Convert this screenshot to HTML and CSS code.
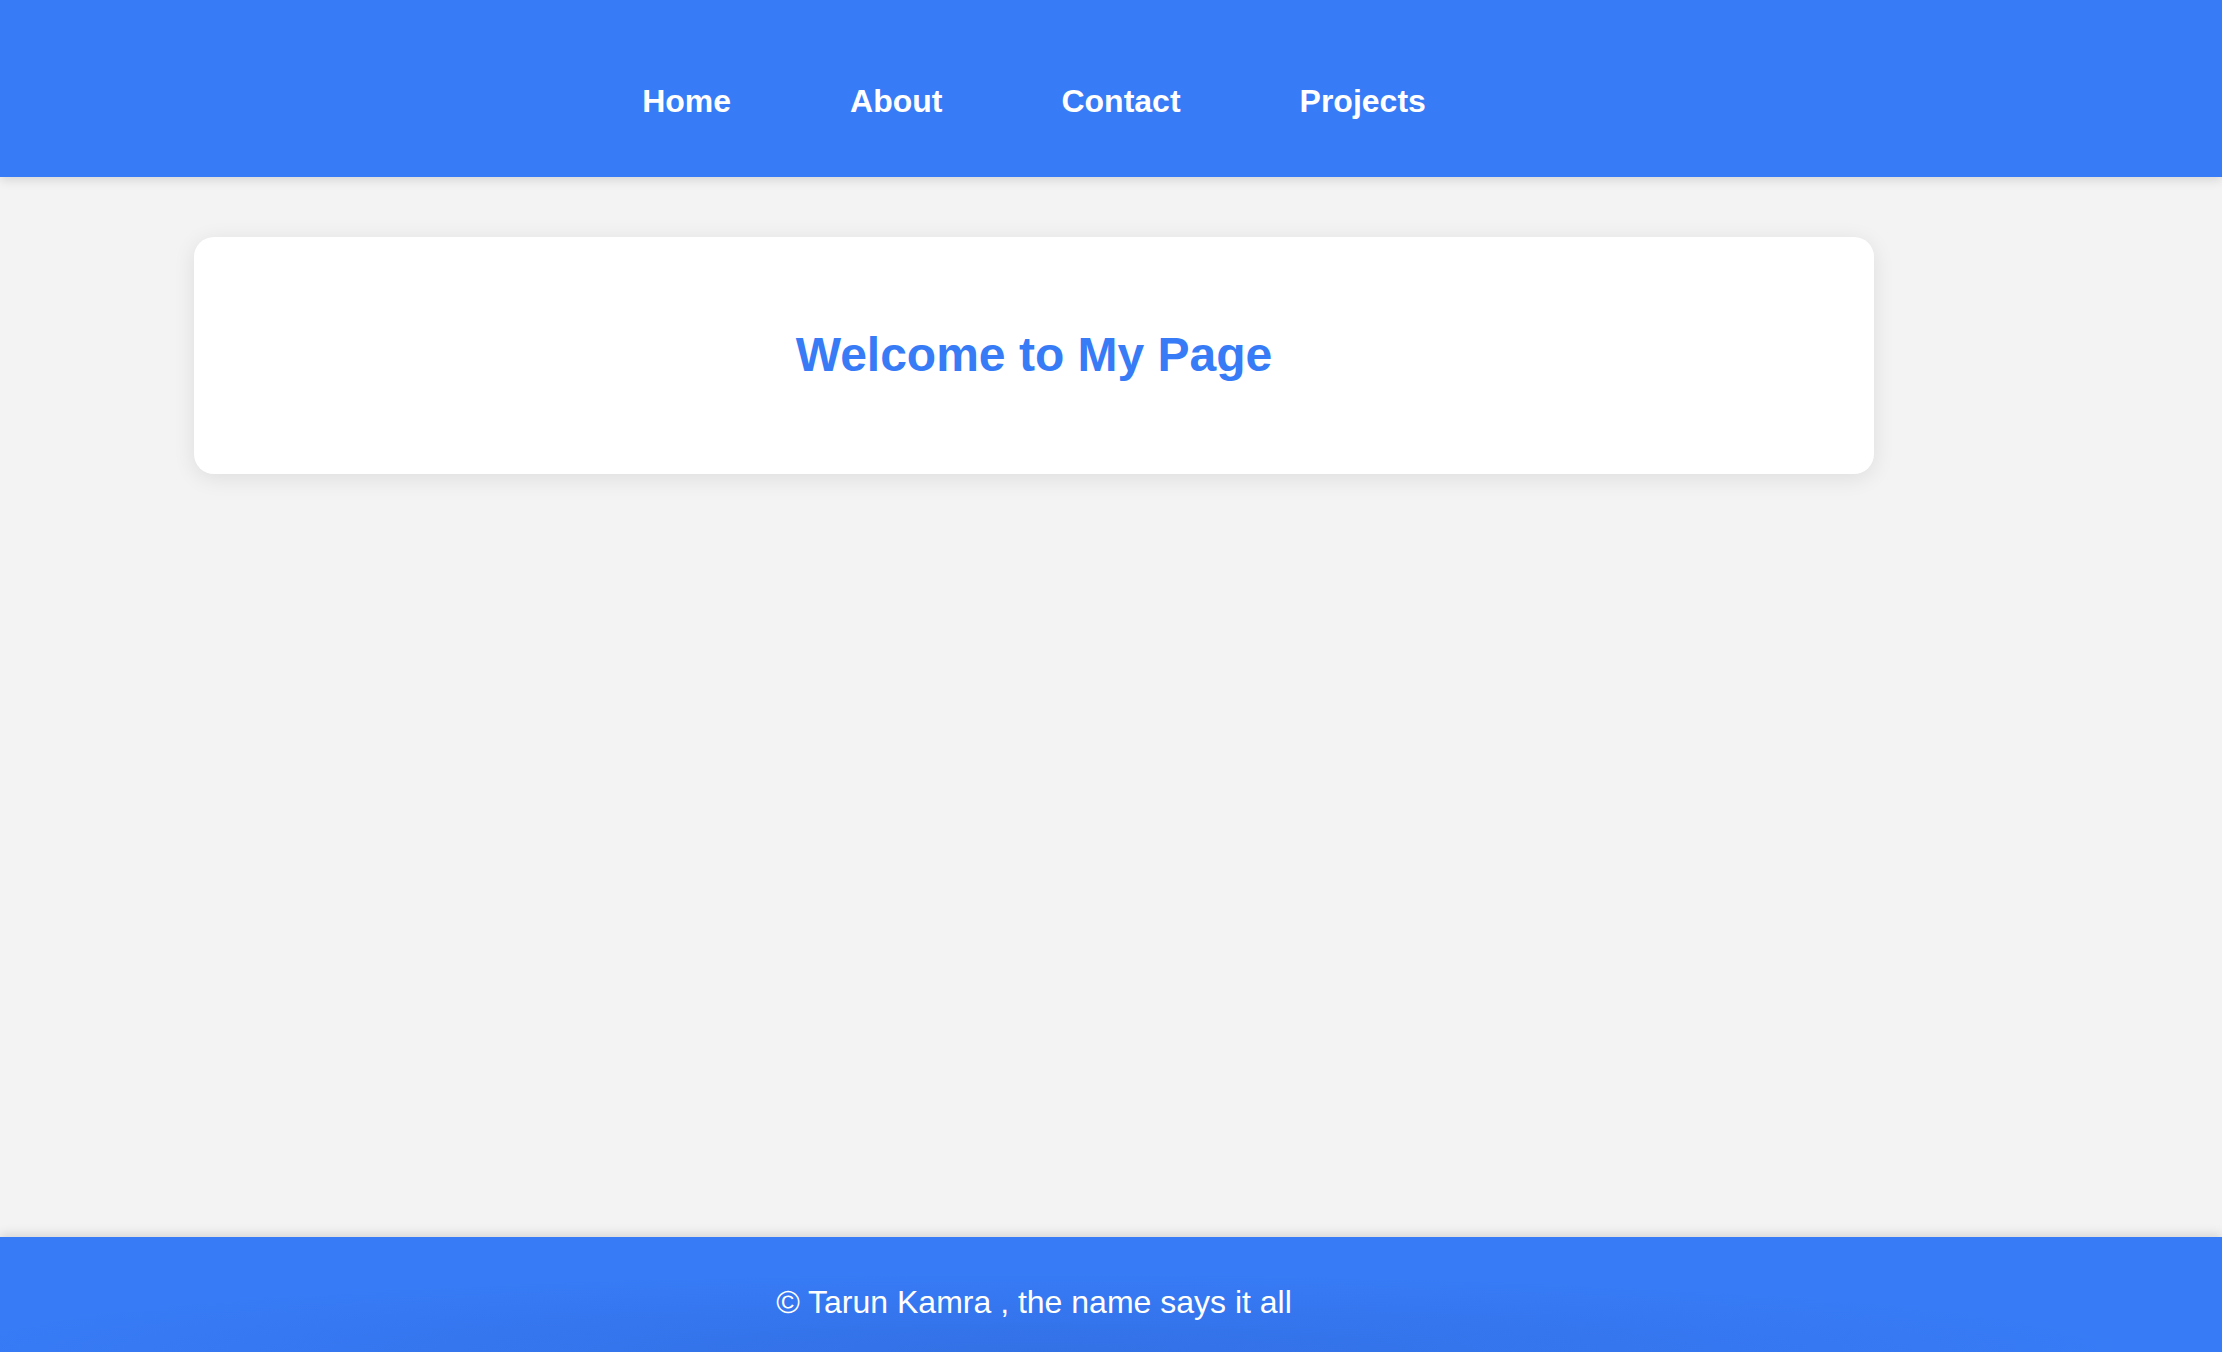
FILE: index.html
```html
<!DOCTYPE html>
<html lang="en">
<head>
<meta charset="utf-8">
<title>My Page</title>
<link rel="stylesheet" href="styles.css">
</head>
<body>
<header class="site-header">
  <nav class="nav">
    <a class="nav-link" href="#">Home</a>
    <a class="nav-link" href="#">About</a>
    <a class="nav-link" href="#">Contact</a>
    <a class="nav-link" href="#">Projects</a>
  </nav>
</header>
<main class="main">
  <section class="card">
    <h1 class="card-title">Welcome to My Page</h1>
  </section>
</main>
<footer class="site-footer">
  <p class="footer-text">© Tarun Kamra , the name says it all</p>
</footer>
</body>
</html>
```

FILE: styles.css
```css
* { box-sizing: border-box; }

html, body {
  margin: 0;
  padding: 0;
}

body {
  height: 100vh;
  display: flex;
  flex-direction: column;
  background: #f3f3f3;
  font-family: "Liberation Sans", Arial, sans-serif;
  overflow: hidden;
}

.site-header {
  flex: none;
  background: #377bf6;
  height: 177px;
  box-shadow: 0 3px 10px rgba(0, 0, 0, 0.12);
  position: relative;
  z-index: 2;
}

.nav {
  width: 2068px;
  display: flex;
  justify-content: center;
  gap: 119px;
  padding-top: 83px;
}

.nav-link {
  color: #ffffff;
  text-decoration: none;
  font-weight: 700;
  font-size: 32px;
  line-height: normal;
}

.main {
  flex: 1;
  width: 2068px;
  padding-top: 60px;
  display: flex;
  justify-content: center;
  align-items: flex-start;
}

.card {
  width: 1680px;
  height: 237px;
  background: #ffffff;
  border-radius: 20px;
  box-shadow: 0 4px 22px rgba(0, 0, 0, 0.09);
  padding-top: 90px;
  text-align: center;
}

.card-title {
  margin: 0;
  font-size: 48px;
  font-weight: 700;
  line-height: normal;
  color: #377bf6;
}

.site-footer {
  flex: none;
  height: 115px;
  background:
    radial-gradient(ellipse 1100px 80px at 1034px 100%, rgba(20, 40, 120, 0.13), rgba(20, 40, 120, 0) 100%),
    #377bf6;
  box-shadow: 0 -3px 10px rgba(0, 0, 0, 0.12);
  padding-top: 47px;
  position: relative;
  z-index: 2;
}

.footer-text {
  width: 2068px;
  margin: 0;
  text-align: center;
  color: #ffffff;
  font-size: 32px;
  line-height: normal;
}
```
